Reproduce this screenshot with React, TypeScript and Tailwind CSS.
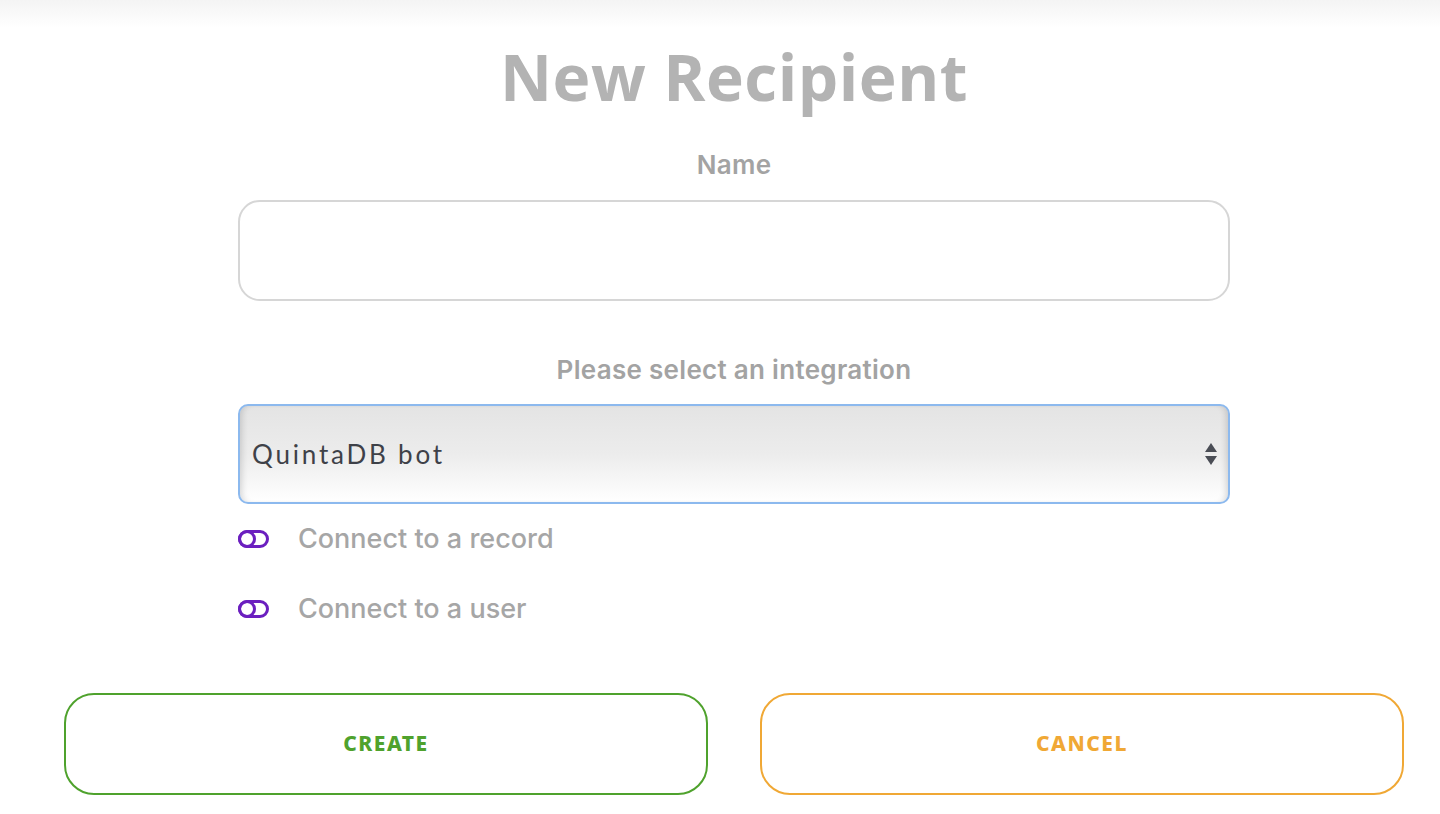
import React from 'react';

const Toggle: React.FC = () => (
  <svg width="31" height="20" viewBox="0 0 31 20" className="shrink-0">
    <rect x="1.5" y="2.5" width="28" height="15" rx="7.5" fill="none" stroke="#6b1fbf" strokeWidth="3" />
    <circle cx="9" cy="10" r="7.5" fill="none" stroke="#6b1fbf" strokeWidth="3" />
  </svg>
);

const App: React.FC = () => {
  const options = [{ label: 'Connect to a record' }, { label: 'Connect to a user' }];

  return (
    <div className="relative w-[1440px] h-[814px] bg-white overflow-hidden" style={{ fontFamily: 'Inter, "Liberation Sans", sans-serif' }}>
      <div className="absolute inset-x-0 top-0 h-[28px] bg-gradient-to-b from-[#f4f4f4] to-white" />

      <div className="relative flex flex-col items-center pt-[40px] pl-[28px]">
        <h1 className="text-[64px] leading-[74px] font-bold text-[#b3b3b3] tracking-[0.5px]" style={{ fontFamily: '"Open Sans", "Liberation Sans", sans-serif' }}>
          New Recipient
        </h1>

        <label className="mt-[36px] text-[26px] leading-[30px] font-semibold text-[#a3a3a3] tracking-[0.3px]">Name</label>
        <div className="mt-[20px] w-[992px] h-[101px] rounded-[22px] border-2 border-[#d6d6d6] bg-white" />

        <label className="mt-[54px] text-[26px] leading-[30px] font-semibold text-[#a3a3a3] tracking-[0.3px]">Please select an integration</label>
        <div className="mt-[19px] w-[992px] h-[100px] rounded-[10px] border-2 border-[#8cb9ee] bg-gradient-to-b from-[#e4e4e4] via-[#ececec] to-white shadow-[inset_6px_0_6px_-4px_rgba(0,0,0,0.15),inset_-6px_0_6px_-4px_rgba(0,0,0,0.15)] flex items-center justify-between pl-[12px] pr-[10px]">
          <span className="text-[26px] text-[#3e4148] font-normal tracking-[2.8px]" style={{ fontFamily: 'Lato, "Noto Sans", sans-serif' }}>QuintaDB bot</span>
          <svg width="14" height="26" viewBox="0 0 14 26">
            <path d="M7 2 L13 11 L1 11 Z" fill="#4a4d55" />
            <path d="M1 15 L13 15 L7 24 Z" fill="#4a4d55" />
          </svg>
        </div>

        <div className="w-[992px] flex flex-col gap-[40px] mt-[20px]">
          {options.map((o, i) => (
            <div key={i} className="flex items-center gap-[29px]">
              <Toggle />
              <span className="text-[27px] leading-[30px] font-medium text-[#a6a6a6]">{o.label}</span>
            </div>
          ))}
        </div>

        <div className="w-[1340px] flex gap-[52px] mt-[69px]">
          <button className="flex-1 h-[102px] rounded-[30px] border-2 border-[#4fa22d] text-[#4fa22d] text-[21px] font-extrabold tracking-[1.5px]" style={{ fontFamily: '"Noto Sans", sans-serif' }}>
            CREATE
          </button>
          <button className="flex-1 h-[102px] rounded-[30px] border-2 border-[#f0a835] text-[#f0a835] text-[21px] font-extrabold tracking-[1.5px]" style={{ fontFamily: '"Noto Sans", sans-serif' }}>
            CANCEL
          </button>
        </div>
      </div>
    </div>
  );
};

export default App;
